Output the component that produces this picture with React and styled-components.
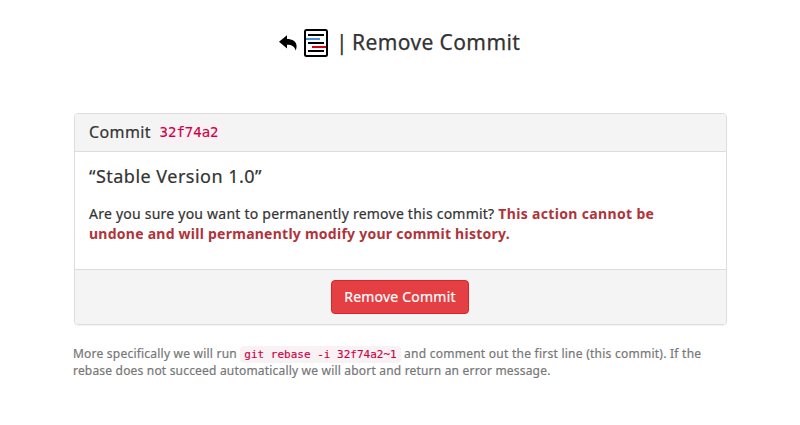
import React from 'react';
import styled, { createGlobalStyle } from 'styled-components';

const GlobalStyle = createGlobalStyle`
  *, *::before, *::after { box-sizing: border-box; }
  body {
    margin: 0;
    background: #fff;
    color: #333;
    font-family: "Noto Sans", "Open Sans", sans-serif;
  }
`;

const Page = styled.main`
  width: 653px;
  margin-left: 74px;
  padding-top: 26px;
`;

const Header = styled.header`
  display: flex;
  align-items: center;
  height: 33px;
  margin-bottom: 54px;
  padding-left: 205px;
  color: #000;
`;

const BackIcon = styled.svg`
  width: 18px;
  height: 16px;
  margin: 1px 7px 0 0;
  flex: none;
`;

const Logo = styled.svg`
  width: 24px;
  height: 28px;
  margin-top: 1px;
  flex: none;
`;

const Title = styled.h1`
  display: flex;
  gap: 4px;
  margin: 0 0 0 8px;
  color: #333;
  font-size: 21px;
  font-weight: 400;
  line-height: 33px;
  letter-spacing: 0.4px;
  white-space: nowrap;
  -webkit-text-stroke: 0.25px currentColor;
`;

const Divider = styled.span`
  width: 12px;
`;

const Panel = styled.section`
  border: 1px solid #ddd;
  border-radius: 4px;
  box-shadow: 0 1px 1px rgba(0, 0, 0, 0.05);
  overflow: hidden;
`;

const PanelHeading = styled.div`
  display: flex;
  align-items: center;
  height: 38px;
  padding: 0 15px 1px 14px;
  background: #f4f4f4;
  border-bottom: 1px solid #ddd;
  font-size: 16px;
  letter-spacing: 0.4px;
  -webkit-text-stroke: 0.2px currentColor;
`;

const Code = styled.code`
  padding: 2px 4px;
  border-radius: 4px;
  background: #f9f2f4;
  color: #cd0045;
  font-family: "DejaVu Sans Mono", monospace;
  font-size: ${(p) => p.$size}px;
  line-height: 1.1;
  letter-spacing: 0;
  -webkit-text-stroke: 0.15px currentColor;
`;

const HashCode = styled(Code)`
  margin: 2px 0 0 4.5px;
`;

const PanelBody = styled.div`
  height: 117px;
  padding: 12px 14px;
`;

const CommitMessage = styled.h2`
  margin: 0 0 15px;
  font-size: 18px;
  font-weight: 400;
  line-height: 25px;
  letter-spacing: 0.48px;
  -webkit-text-stroke: 0.2px currentColor;
`;

const Paragraph = styled.p`
  margin: 0;
  font-size: 14px;
  line-height: 20px;
  -webkit-text-stroke: 0.2px currentColor;
`;

const Line = styled.span`
  display: block;
  white-space: nowrap;
  letter-spacing: ${(p) => p.$tracking || 0}px;
`;

const Warning = styled.strong`
  color: #b0333a;
  font-weight: 700;
  letter-spacing: ${(p) => p.$tracking || 0}px;
  -webkit-text-stroke: 0;
`;

const PanelFooter = styled.div`
  display: flex;
  justify-content: center;
  align-items: center;
  height: 55px;
  padding-right: 1px;
  background: #f4f4f4;
  border-top: 1px solid #ddd;
`;

const DangerButton = styled.button`
  width: 138px;
  height: 34px;
  padding: 0 0 2px;
  border: 1px solid #dc2328;
  border-radius: 4px;
  background: #e43f43;
  color: #fff;
  font-family: inherit;
  font-size: 14px;
  letter-spacing: 0.22px;
  -webkit-text-stroke: 0.2px currentColor;
`;

const Note = styled.p`
  margin: 20px 0 0 -1px;
  color: #777;
  font-size: 12px;
  line-height: 17px;
  -webkit-text-stroke: 0.2px currentColor;
`;

const Tracked = styled.span`
  letter-spacing: ${(p) => p.$tracking}px;
`;

export default function App() {
  return (
    <>
      <GlobalStyle />
      <Page>
        <Header>
          <BackIcon viewBox="0 0 18 16" fill="currentColor" aria-label="Back">
            <path d="M0 6.8 8 0.2V4C13.2 4 17.6 6 17.6 11.2C17.6 12.8 17.2 14.3 16.6 15.6C15.8 11.7 13 9.7 8 9.7V13.4Z" />
          </BackIcon>
          <Logo viewBox="0 0 24 28" fill="none">
            <rect x="1" y="1" width="22" height="26" rx="1.5" stroke="#000" strokeWidth="2" />
            <path d="M4 6H20M4 14H20M4 22H20" stroke="#000" strokeWidth="2" />
            <path d="M2 10H16" stroke="#4a90e2" strokeWidth="2" />
            <path d="M8 18H22" stroke="#d80010" strokeWidth="2" />
          </Logo>
          <Title>
            <Divider>|</Divider>
            <span>Remove Commit</span>
          </Title>
        </Header>
        <Panel>
          <PanelHeading>
            Commit
            <HashCode $size={14}>32f74a2</HashCode>
          </PanelHeading>
          <PanelBody>
            <CommitMessage>“Stable Version 1.0”</CommitMessage>
            <Paragraph>
              <Line $tracking={0.23}>
                Are you sure you want to permanently remove this commit?{' '}
                <Warning $tracking={0.34}>This action cannot be</Warning>
              </Line>
              <Line>
                <Warning $tracking={0.25}>undone and will permanently modify your commit history.</Warning>
              </Line>
            </Paragraph>
          </PanelBody>
          <PanelFooter>
            <DangerButton type="button">Remove Commit</DangerButton>
          </PanelFooter>
        </Panel>
        <Note>
          <Line>
            <Tracked $tracking={0.22}>More specifically we will run </Tracked>
            <Code $size={11}>git rebase -i 32f74a2~1</Code>
            <Tracked $tracking={0.25}> and comment out the first line (this commit). If the</Tracked>
          </Line>
          <Line $tracking={0.19}>
            rebase does not succeed automatically we will abort and return an error message.
          </Line>
        </Note>
      </Page>
    </>
  );
}
